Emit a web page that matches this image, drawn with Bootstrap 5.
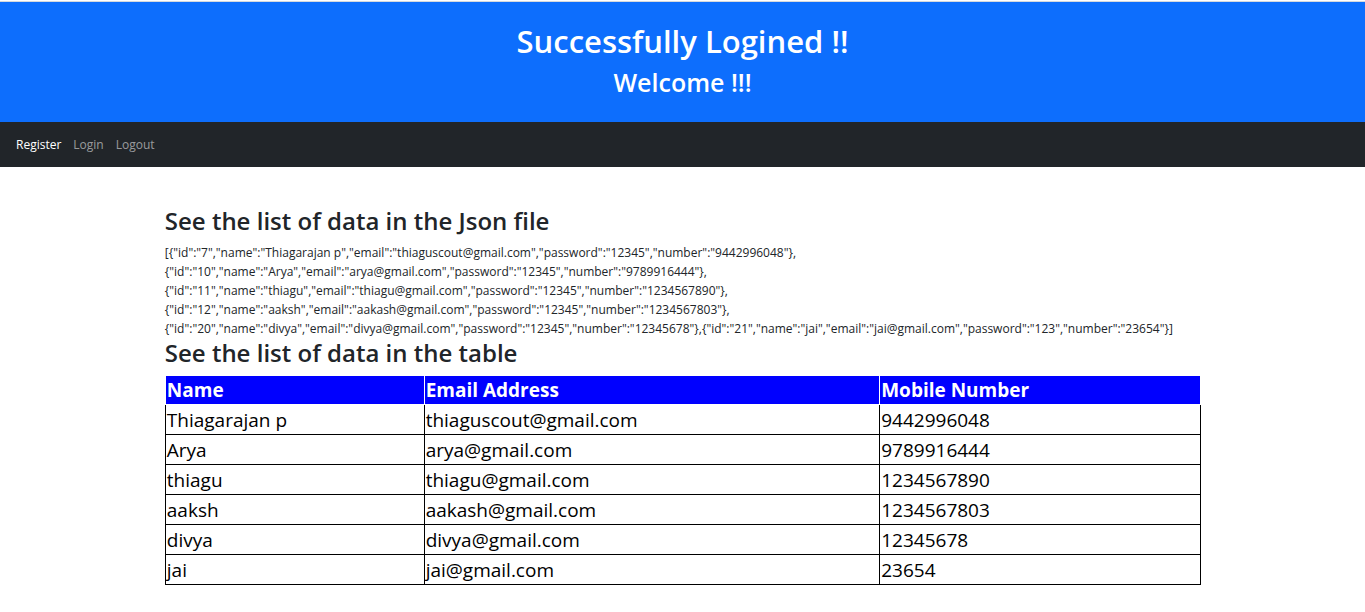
<!DOCTYPE html>
<html lang="en">
<head>
<meta charset="utf-8">
<meta name="viewport" content="width=device-width, initial-scale=1">
<title>Welcome</title>
<link href="https://cdn.jsdelivr.net/npm/bootstrap@5.3.0/dist/css/bootstrap.min.css" rel="stylesheet">
<style>
body { font-family: "Open Sans", "Noto Sans", sans-serif; font-size: 12px; line-height: 19px; padding-top: 1px; }
.page-head { border-top: 1px solid #d5d9dd; padding: 21px 0 17px; }
h1 { font-size: 31px; line-height: 36px; font-weight: 600; margin-bottom: 8px; }
h2, h3 { font-size: 25px; line-height: 30px; font-weight: 600; }
h3 { font-size: 24px; margin-bottom: 7px; }
.site-nav { padding: 5px 0; --bs-navbar-nav-link-padding-x: 6px; }
.site-nav .container-fluid { padding: 0 10px; }
.page-body { width: 76%; margin-top: 39px; padding-left: 1px; }
.user-table { font-size: 19px; line-height: 28px; color: #000; }
.user-table th, .user-table td { border: 1px solid #000; padding: 1px 1px 0; }
.user-table th { background: #00f; color: #fff; border-color: #fff; padding-top: 0; }
.col-name { width: 25%; }
.col-email { width: 44%; }
</style>
</head>
<body>
<header class="page-head bg-primary text-white text-center">
<h1>Successfully Logined !!</h1>
<h2>Welcome !!!</h2>
</header>
<nav class="navbar navbar-expand-sm bg-dark navbar-dark site-nav">
<div class="container-fluid">
<ul class="navbar-nav">
<li class="nav-item"><a class="nav-link active" href="#">Register</a></li>
<li class="nav-item"><a class="nav-link" href="#">Login</a></li>
<li class="nav-item"><a class="nav-link" href="#">Logout</a></li>
</ul>
</div>
</nav>
<main class="page-body mx-auto">
<h3>See the list of data in the Json file</h3>
<div>[{"id":"7","name":"Thiagarajan p","email":"thiaguscout@gmail.com","password":"12345","number":"9442996048"},<br>{"id":"10","name":"Arya","email":"arya@gmail.com","password":"12345","number":"9789916444"},<br>{"id":"11","name":"thiagu","email":"thiagu@gmail.com","password":"12345","number":"1234567890"},<br>{"id":"12","name":"aaksh","email":"aakash@gmail.com","password":"12345","number":"1234567803"},<br>{"id":"20","name":"divya","email":"divya@gmail.com","password":"12345","number":"12345678"},{"id":"21","name":"jai","email":"jai@gmail.com","password":"123","number":"23654"}]</div>
<h3>See the list of data in the table</h3>
<table class="user-table w-100">
<thead><tr><th class="col-name">Name</th><th class="col-email">Email Address</th><th>Mobile Number</th></tr></thead>
<tbody>
<tr><td>Thiagarajan p</td><td>thiaguscout@gmail.com</td><td>9442996048</td></tr>
<tr><td>Arya</td><td>arya@gmail.com</td><td>9789916444</td></tr>
<tr><td>thiagu</td><td>thiagu@gmail.com</td><td>1234567890</td></tr>
<tr><td>aaksh</td><td>aakash@gmail.com</td><td>1234567803</td></tr>
<tr><td>divya</td><td>divya@gmail.com</td><td>12345678</td></tr>
<tr><td>jai</td><td>jai@gmail.com</td><td>23654</td></tr>
</tbody>
</table>
</main>
</body>
</html>
